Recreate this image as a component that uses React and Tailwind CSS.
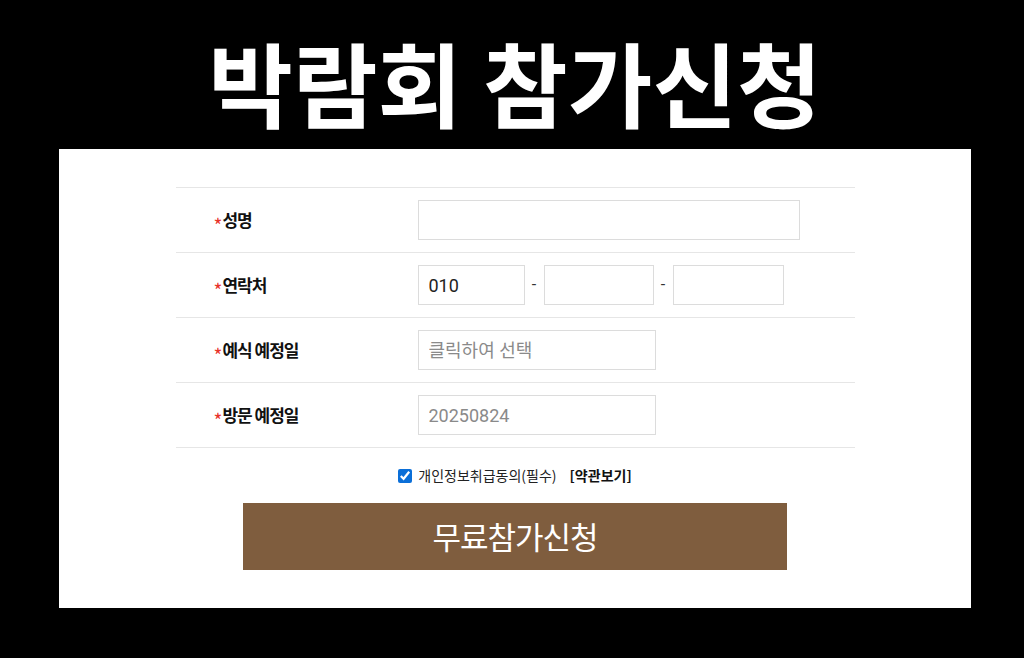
import React from 'react';

const rows = [
  { label: '성명', type: 'name' },
  { label: '연락처', type: 'phone' },
  { label: '예식 예정일', type: 'date', placeholder: '클릭하여 선택' },
  { label: '방문 예정일', type: 'date', value: '20250824' },
];

const inputCls =
  'h-[40px] border border-[#dcdcdc] bg-white px-[10px] text-[18px] outline-none placeholder:text-[#8a8a8a]';

export default function App() {
  return (
    <div
      className="min-h-screen w-full bg-black flex flex-col"
      style={{ fontFamily: "Roboto, 'Noto Sans CJK KR', sans-serif" }}
    >
      <h1
        className="h-[149px] flex items-center justify-center text-white text-[92px] font-bold leading-none tracking-[0px] pt-[12px] pl-[6px]"
        style={{ fontFamily: "'Noto Sans CJK KR', sans-serif" }}
      >
        박람회&nbsp;참가신청
      </h1>

      <div className="ml-[59px] w-[912px] bg-white pt-[38px] pb-[38px] flex flex-col items-center">
        <div className="w-[679px] border-t border-[#e6e6e6]">
          {rows.map((r) => (
            <div key={r.label} className="h-[65px] border-b border-[#e6e6e6] flex items-center">
              <div
                className="w-[242px] pl-[38px] flex items-center text-[17px] font-bold text-[#111] tracking-[-1px]"
                style={{ fontFamily: "'Noto Sans CJK KR', sans-serif" }}
              >
                <span className="inline-block text-[#e8322b] text-[19px] font-normal mr-[1px] translate-y-[5px]">*</span>
                {r.label}
              </div>
              {r.type === 'name' && <input className={`${inputCls} w-[382px] text-[#222]`} />}
              {r.type === 'phone' && (
                <div className="flex items-center">
                  <input className={`${inputCls} w-[107px] text-[#222]`} defaultValue="010" />
                  <span className="w-[19px] text-center text-[16px] text-[#333]">-</span>
                  <input className={`${inputCls} w-[110px] text-[#222]`} />
                  <span className="w-[19px] text-center text-[16px] text-[#333]">-</span>
                  <input className={`${inputCls} w-[111px] text-[#222]`} />
                </div>
              )}
              {r.type === 'date' && (
                <input
                  className={`${inputCls} w-[238px] text-[#8a8a8a]`}
                  placeholder={r.placeholder}
                  defaultValue={r.value}
                  readOnly
                />
              )}
            </div>
          ))}
        </div>

        <div className="h-[55px] flex items-center justify-center text-[14px] text-[#222]">
          <input type="checkbox" defaultChecked className="w-[14px] h-[14px] mr-[6px] accent-[#0b6fd8]" />
          <span style={{ fontFamily: "'Noto Sans CJK KR', sans-serif" }}>개인정보취급동의(필수)</span>
          <span
            className="ml-[13px] font-bold text-[#111]"
            style={{ fontFamily: "'Noto Sans CJK KR', sans-serif" }}
          >
            [약관보기]
          </span>
        </div>

        <button
          className="w-[544px] h-[67px] bg-[#7f5d3e] text-white text-[31px] font-normal flex items-center justify-center tracking-[-1px]"
          style={{ fontFamily: "'Noto Sans CJK KR', sans-serif" }}
        >
          무료참가신청
        </button>
      </div>
    </div>
  );
}
